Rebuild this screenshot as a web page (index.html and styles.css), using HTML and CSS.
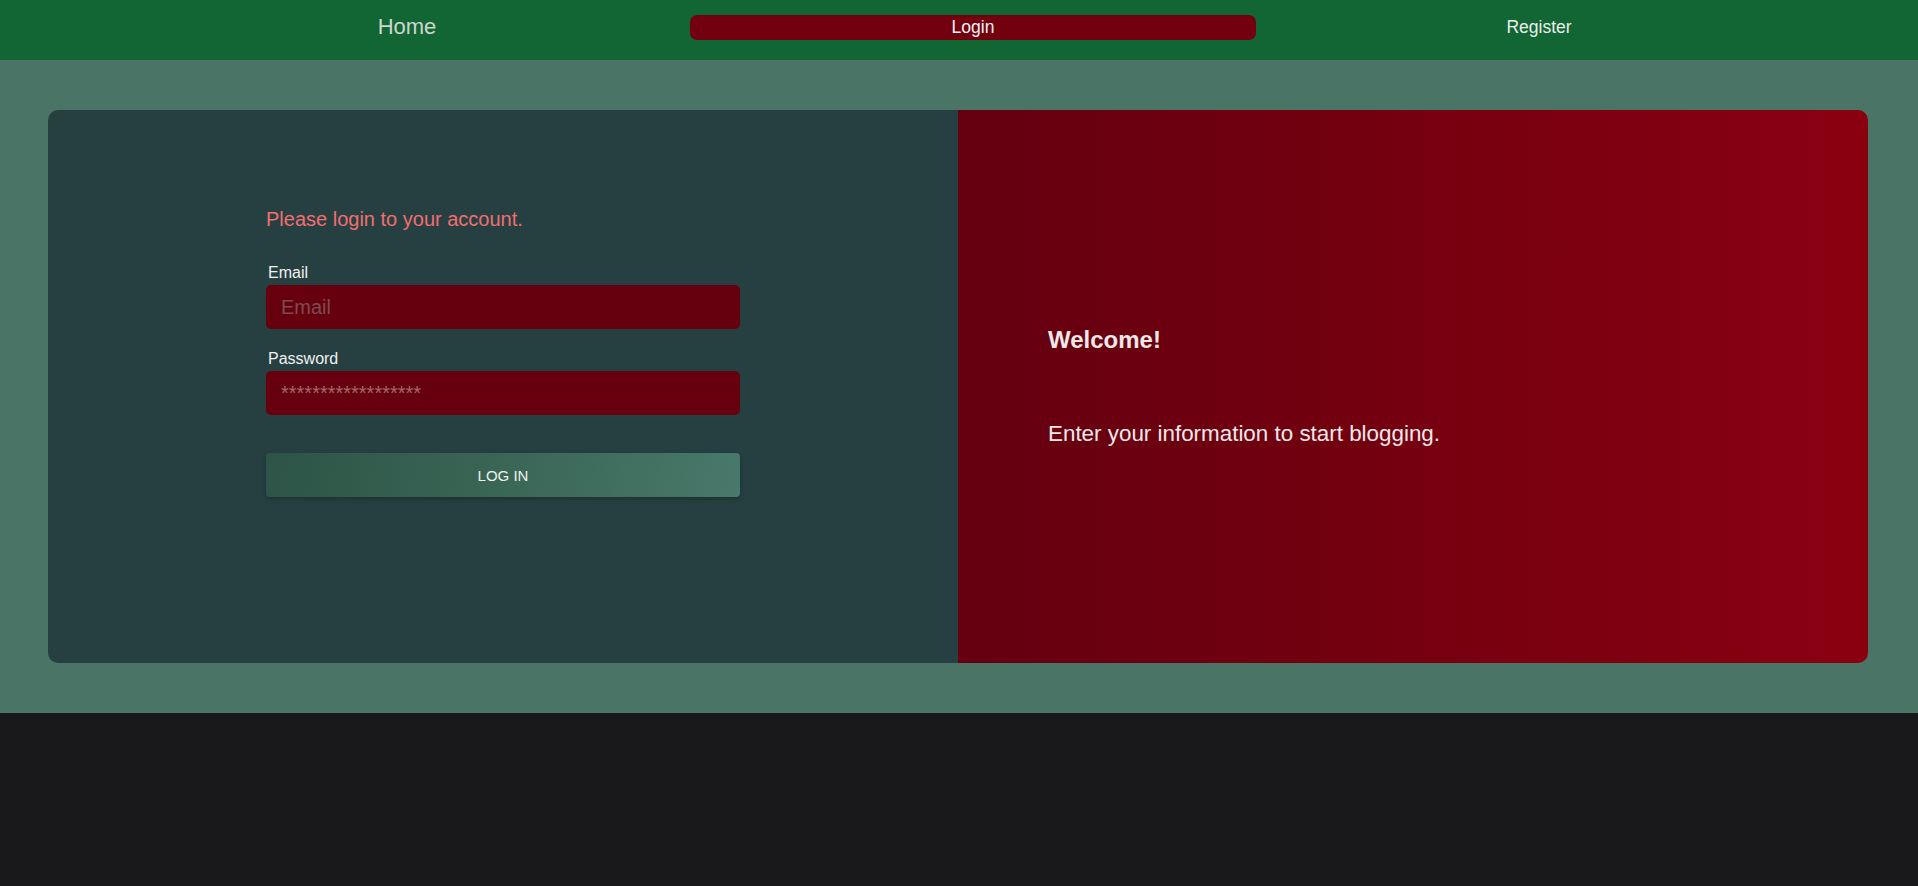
FILE: index.html
```html
<!DOCTYPE html>
<html lang="en">
<head>
<meta charset="utf-8">
<title>Login</title>
<link rel="stylesheet" href="styles.css">
</head>
<body>
<nav class="navbar">
  <ul class="nav-links">
    <li class="nav-item"><a class="nav-home" href="#">Home</a></li>
    <li class="nav-item"><a class="nav-link active" href="#">Login</a></li>
    <li class="nav-item"><a class="nav-link" href="#">Register</a></li>
  </ul>
</nav>
<section class="auth-section">
  <div class="auth-card">
    <div class="auth-left">
      <form class="login-form">
        <p class="form-title">Please login to your account.</p>
        <div class="field">
          <label class="field-label" for="email">Email</label>
          <input class="field-input email-input" id="email" type="email" placeholder="Email">
        </div>
        <div class="field">
          <label class="field-label" for="password">Password</label>
          <input class="field-input pass-input" id="password" type="password" placeholder="******************">
        </div>
        <button class="login-btn" type="button">LOG IN</button>
      </form>
    </div>
    <div class="auth-right">
      <div class="welcome">
        <h4 class="welcome-title">Welcome!</h4>
        <p class="welcome-text">Enter your information to start blogging.</p>
      </div>
    </div>
  </div>
</section>
</body>
</html>
```

FILE: styles.css
```css
* { box-sizing: border-box; }

html, body {
  margin: 0;
  padding: 0;
  height: 100%;
}

body {
  background: #19191b;
  font-family: "Liberation Sans", Arial, sans-serif;
  color: #ececec;
}

.navbar {
  height: 60px;
  background: #116633;
}

.nav-links {
  list-style: none;
  margin: 0 96px 0 124px;
  padding: 15px 0 0;
  display: flex;
}

.nav-item {
  flex: 1;
  display: flex;
}

.nav-home,
.nav-link {
  flex: 1;
  text-align: center;
  text-decoration: none;
}

.nav-home {
  font-size: 22px;
  line-height: 25px;
  color: #cdd6cf;
  margin-top: -1px;
}

.nav-link {
  font-size: 17.5px;
  line-height: 25px;
  height: 25px;
  color: #eceeea;
  border-radius: 7px;
}

.nav-link.active {
  background: #72000e;
  color: #f4f4f4;
}

.auth-section {
  background: #4a7566;
  padding: 50px 0;
}

.auth-card {
  margin: 0 50px 0 48px;
  height: 553px;
  display: flex;
  border-radius: 10px;
  overflow: hidden;
}

.auth-left {
  flex: 0 0 50%;
  background: #264042;
  padding-top: 98px;
  display: flex;
  justify-content: center;
}

.login-form {
  width: 474px;
}

.form-title {
  margin: 0 0 33px;
  font-size: 20px;
  line-height: 23px;
  color: #f26e70;
}

.field {
  margin-bottom: 21px;
}

.field-label {
  display: block;
  font-size: 16px;
  line-height: 18px;
  margin: 0 0 3px 2px;
  color: #f1f1f1;
}

.field-input {
  display: block;
  width: 100%;
  height: 44px;
  border: none;
  border-radius: 5px;
  background: #67000e;
  padding: 0 15px;
  font-family: "Liberation Sans", Arial, sans-serif;
  font-size: 20px;
  color: #eee;
  outline: none;
}

.email-input::placeholder {
  color: #7d4c51;
}

.pass-input::placeholder {
  color: #a4666e;
}

.login-btn {
  display: block;
  width: 100%;
  height: 44px;
  margin-top: 38px;
  border: none;
  border-radius: 4px;
  background: linear-gradient(100deg, #2d5446 0%, #3a6656 50%, #48796a 100%);
  box-shadow: 0 2px 4px rgba(0, 0, 0, 0.25);
  font-family: "Liberation Sans", Arial, sans-serif;
  font-size: 15px;
  color: #eef2ee;
}

.auth-right {
  flex: 0 0 50%;
  background: linear-gradient(90deg, #640010 0%, #75000f 50%, #8a0011 100%);
  display: flex;
  align-items: center;
  padding-left: 90px;
}

.welcome-title {
  margin: 0 0 67px;
  font-size: 24px;
  line-height: 28px;
  font-weight: bold;
  color: #efe8e8;
}

.welcome-text {
  margin: 0;
  font-size: 22.4px;
  line-height: 26px;
  color: #efe8e8;
}
```
